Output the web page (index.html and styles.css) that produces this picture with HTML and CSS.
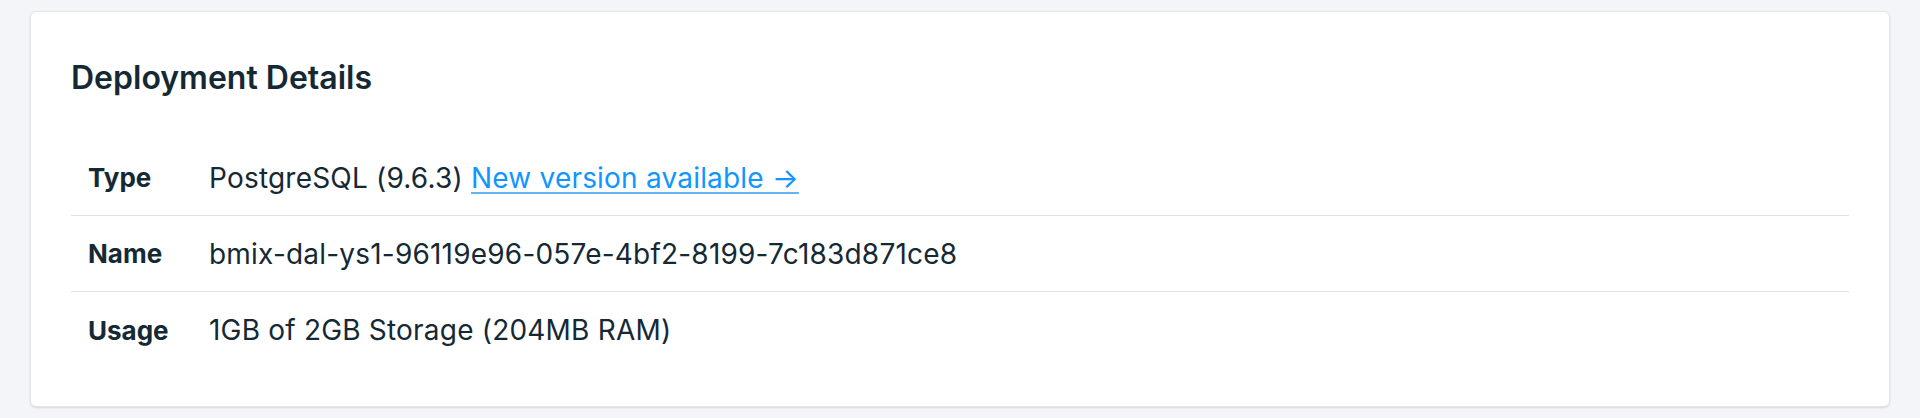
FILE: index.html
```html
<!DOCTYPE html>
<html>
<head>
<meta charset="utf-8">
<link rel="stylesheet" href="styles.css">
</head>
<body>
<section class="card">
  <h2 class="card-title">Deployment Details</h2>
  <div class="details">
    <div class="row">
      <div class="label">Type</div>
      <div class="value">PostgreSQL (9.6.3) <a class="link" href="#">New version available →</a></div>
    </div>
    <div class="row">
      <div class="label">Name</div>
      <div class="value">bmix-dal-ys1-96119e96-057e-4bf2-8199-7c183d871ce8</div>
    </div>
    <div class="row">
      <div class="label">Usage</div>
      <div class="value">1GB of 2GB Storage (204MB RAM)</div>
    </div>
  </div>
</section>
</body>
</html>
```
FILE: styles.css
```css
html, body {
  margin: 0;
  padding: 0;
  background: #f4f5f9;
}
body {
  padding: 11px 30px 11px 30px;
  font-family: "Inter", "Noto Sans", sans-serif;
  color: #152935;
}
.card {
  background: #ffffff;
  border: 1px solid #e1e4e8;
  border-radius: 6px;
  box-shadow: 0 1px 2px rgba(0, 0, 0, 0.12);
  padding: 40px 40px 39px 40px;
  height: 396px;
  box-sizing: border-box;
}
.card-title {
  margin: 0;
  font-size: 32px;
  line-height: 52px;
  font-weight: 600;
  color: #152935;
}
.details {
  margin-top: 36px;
}
.row {
  display: grid;
  grid-template-columns: 138px 1fr;
  align-items: center;
  height: 76px;
  border-bottom: 1px solid #dfe3e6;
  box-sizing: border-box;
}
.row:last-child {
  border-bottom: none;
}
.label {
  padding-left: 17px;
  font-size: 26px;
  font-weight: 700;
}
.value {
  font-size: 28px;
  letter-spacing: 0.2px;
  font-weight: 400;
}
.link {
  color: #0f96ff;
  text-decoration: underline;
  text-decoration-color: #62b6f8;
  text-underline-offset: 4px;
  text-decoration-thickness: 2px;
}
```
